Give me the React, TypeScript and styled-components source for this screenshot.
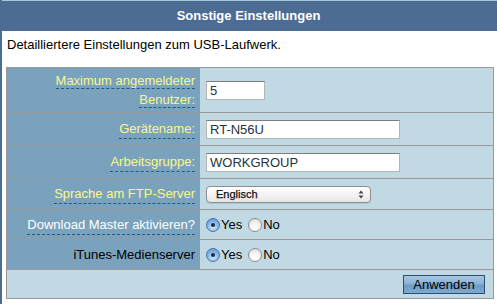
import React from "react";
import styled, { createGlobalStyle } from "styled-components";

const Global = createGlobalStyle`
  html, body { margin: 0; padding: 0; background: #ffffff; }
  body { font-family: "Liberation Sans", Arial, sans-serif; font-size: 13px; }
  * { box-sizing: border-box; }
`;

const Page = styled.div`
  width: 497px;
  height: 304px;
  border-left: 2px solid #4c6c93;
  background: #ffffff;
  overflow: hidden;
`;

const Header = styled.div`
  height: 31px;
  margin-left: -2px;
  border-top: 1px solid #a9c7da;
  background: #4c6c93;
  color: #ffffff;
  font-weight: bold;
  font-size: 13px;
  line-height: 30px;
  text-align: center;
`;

const Description = styled.div`
  padding: 6px 0 0 5px;
  height: 36px;
  line-height: 16px;
  color: #000000;
`;

const Table = styled.div`
  margin-left: 4px;
  width: 488px;
  border: 1px solid #999999;
  display: grid;
  grid-template-columns: 193px 1fr;
`;

const Label = styled.div<{ $h: number }>`
  height: ${(p) => p.$h}px;
  background: #7aa2bc;
  border-right: 1px solid #999999;
  border-bottom: 1px solid #999999;
  display: flex;
  align-items: center;
  justify-content: flex-end;
  text-align: right;
  padding: 0 4px 0 12px;
  line-height: 19px;
`;

const Hint = styled.span<{ $tone: "yellow" | "white" | "plain" }>`
  color: ${(p) =>
    p.$tone === "yellow" ? "#f8f890" : p.$tone === "white" ? "#ffffff" : "#000000"};
  border-bottom: ${(p) => (p.$tone === "plain" ? "none" : "1px dashed #1d5b8a")};
`;

const Field = styled.div<{ $h: number }>`
  height: ${(p) => p.$h}px;
  background: #c0d9e2;
  border-bottom: 1px solid #999999;
  display: flex;
  align-items: center;
  padding-left: 6px;
`;

const TextInput = styled.input<{ $w: number }>`
  width: ${(p) => p.$w}px;
  height: 19px;
  border: 1px solid #b4b4b4;
  border-top-color: #7d7d7d;
  background: #ffffff;
  color: #26323d;
  font-family: "Liberation Sans", Arial, sans-serif;
  font-size: 13px;
  padding: 0 0 0 3px;
  margin: 0;
  outline: none;
`;

const SelectBox = styled.div`
  width: 165px;
  height: 17px;
  border: 1px solid #8e8e8e;
  border-radius: 4px;
  background: linear-gradient(#ffffff, #f1f1f1 60%, #e6e6e6);
  box-shadow: 0 1px 0 rgba(0, 0, 0, 0.08);
  display: flex;
  align-items: center;
  justify-content: space-between;
  padding: 0 6px 0 9px;
  font-size: 11px;
  color: #111111;
  -webkit-text-stroke: 0.25px #111111;
`;

const RadioGroup = styled.div`
  display: flex;
  align-items: center;
`;

const RadioOption = styled.label`
  display: flex;
  align-items: center;
  gap: 1px;
  margin-right: 6px;
  color: #000000;
  font-size: 13px;
`;

const RadioDot = styled.span<{ $on: boolean }>`
  width: 14px;
  height: 14px;
  border-radius: 50%;
  border: 1px solid ${(p) => (p.$on ? "#51719a" : "#8d8d8d")};
  background: ${(p) =>
    p.$on
      ? "radial-gradient(circle at 50% 70%, #cfe6fb 0%, #8fbdec 45%, #4d8ed8 100%)"
      : "radial-gradient(circle at 50% 75%, #ffffff 0%, #f2f2f2 50%, #d2d2d2 100%)"};
  display: flex;
  align-items: center;
  justify-content: center;
  &::after {
    content: "";
    width: 4px;
    height: 4px;
    border-radius: 50%;
    background: #1b2a3c;
    display: ${(p) => (p.$on ? "block" : "none")};
  }
`;

const Footer = styled.div`
  grid-column: 1 / span 2;
  height: 28px;
  background: #c0d9e2;
  display: flex;
  align-items: center;
  justify-content: flex-end;
  padding-right: 8px;
`;

const ApplyButton = styled.button`
  width: 82px;
  height: 19px;
  border: 1px solid #2c4d74;
  background: linear-gradient(#a9c8e4 0%, #8ab2d6 45%, #6e9bc6 55%, #7ea9d1 100%);
  color: #000000;
  font-family: "Liberation Sans", Arial, sans-serif;
  font-size: 13px;
  padding: 0;
  margin: 0;
`;

const Arrows = () => (
  <svg width="6" height="9" viewBox="0 0 6 9">
    <path d="M3 0.5 L5.5 3.5 H0.5 Z" fill="#444" />
    <path d="M3 8.5 L5.5 5.5 H0.5 Z" fill="#444" />
  </svg>
);

const Radios = ({ on }: { on: "yes" | "no" }) => (
  <RadioGroup>
    <RadioOption>
      <RadioDot $on={on === "yes"} />
      Yes
    </RadioOption>
    <RadioOption>
      <RadioDot $on={on === "no"} />
      No
    </RadioOption>
  </RadioGroup>
);

export default function App() {
  return (
    <>
      <Global />
      <Page>
        <Header>Sonstige Einstellungen</Header>
        <Description>Detailliertere Einstellungen zum USB-Laufwerk.</Description>
        <Table>
          <Label $h={45}>
            <div>
              <Hint $tone="yellow">Maximum angemeldeter Benutzer:</Hint>
            </div>
          </Label>
          <Field $h={45}>
            <TextInput $w={59} defaultValue="5" />
          </Field>

          <Label $h={33}>
            <Hint $tone="yellow">Gerätename:</Hint>
          </Label>
          <Field $h={33}>
            <TextInput $w={194} defaultValue="RT-N56U" />
          </Field>

          <Label $h={33}>
            <Hint $tone="yellow">Arbeitsgruppe:</Hint>
          </Label>
          <Field $h={33}>
            <TextInput $w={194} defaultValue="WORKGROUP" />
          </Field>

          <Label $h={31}>
            <Hint $tone="yellow">Sprache am FTP-Server</Hint>
          </Label>
          <Field $h={31}>
            <SelectBox>
              <span>Englisch</span>
              <Arrows />
            </SelectBox>
          </Field>

          <Label $h={30}>
            <Hint $tone="white">Download Master aktivieren?</Hint>
          </Label>
          <Field $h={30}>
            <Radios on="yes" />
          </Field>

          <Label $h={30}>
            <Hint $tone="plain">iTunes-Medienserver</Hint>
          </Label>
          <Field $h={30}>
            <Radios on="yes" />
          </Field>

          <Footer>
            <ApplyButton>Anwenden</ApplyButton>
          </Footer>
        </Table>
      </Page>
    </>
  );
}
